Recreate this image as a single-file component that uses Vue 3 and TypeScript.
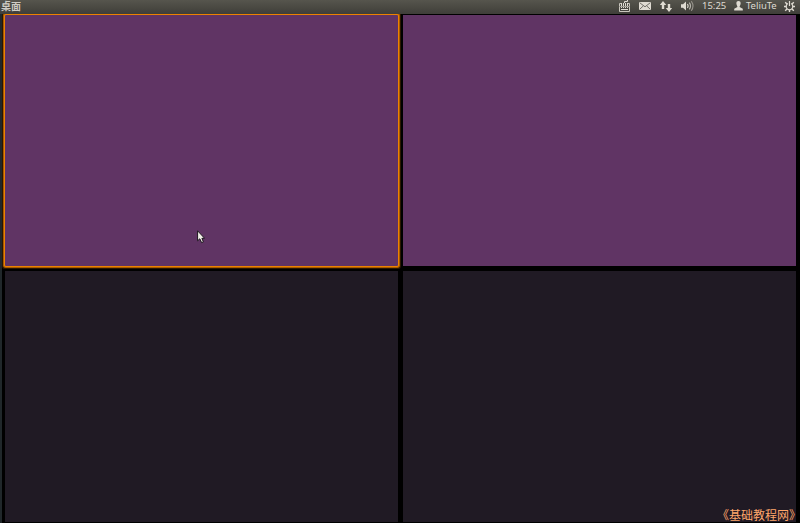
<script setup lang="ts">
const workspaces = [
  { id: 1, selected: true, lit: true },
  { id: 2, selected: false, lit: true },
  { id: 3, selected: false, lit: false },
  { id: 4, selected: false, lit: false },
]
</script>

<template>
  <div class="desktop">
    <header class="panel">
      <span class="title">桌面</span>
      <svg class="keyboard" width="13" height="12" viewBox="0 0 13 12">
        <path d="M6.5 3V1.5H9.5V0" fill="none" stroke="#dfdbd2" />
        <path d="M3 3.5H1.5V11.5H11.5V3.5H10" fill="none" stroke="#c9c6bd" />
        <path d="M3.5 3V8M5.5 3V8M7.5 3V8M9.5 3V8M3 9.5H10" stroke="#dfdbd2" fill="none" />
        <path d="M1 6.5H12" stroke="#a19e96" fill="none" />
      </svg>
      <svg class="mail" width="12" height="8" viewBox="0 0 12 8">
        <rect width="12" height="8" rx=".7" fill="#dfdbd2" />
        <path d="M.8.8 6 4.8 11.2.8M.8 7.2 4.2 4M11.2 7.2 7.8 4" fill="none" stroke="#54524b" stroke-width=".8" />
      </svg>
      <svg class="network" width="12" height="11" viewBox="0 0 12 11">
        <path d="M3 0 6.3 4H4.2V8H1.8V4H-.3ZM7.8 3h2.4v4h2.1L9 11 5.7 7H7.8Z" fill="#dfdbd2" />
      </svg>
      <svg class="sound" width="13" height="10" viewBox="0 0 13 10">
        <path d="M0 3.3H2L5 .5V9.5L2 6.7H0Z" fill="#dfdbd2" />
        <path d="M6.5 3Q7.8 5 6.5 7" fill="none" stroke="#dfdbd2" stroke-width="1.2" />
        <path d="M8.3 1.6Q10.7 5 8.3 8.4" fill="none" stroke="#b8b5ac" stroke-width="1.2" />
        <path d="M10.3.3Q13.7 5 10.3 9.7" fill="none" stroke="#99968e" stroke-width="1.1" />
      </svg>
      <span class="clock">15:25</span>
      <svg class="user" width="9" height="10" viewBox="0 0 9 10">
        <path d="M4.5 0C6.2 0 6.8 1.2 6.6 2.8 6.4 4.5 5.6 4.9 5.6 6L8.8 7.7V9.5H.2V7.7L3.4 6C3.4 4.9 2.6 4.5 2.4 2.8 2.2 1.2 2.8 0 4.5 0Z" fill="#dfdbd2" />
      </svg>
      <span class="name">TeliuTe</span>
      <svg class="session" width="11" height="11" viewBox="0 0 11 11">
        <path d="M3.9 2.6A3.3 3.3 0 1 0 7.1 2.6M5.5 0V5" fill="none" stroke="#dfdbd2" stroke-width="1.2" />
        <path d="M1.2 1.2 3 3M9.8 1.2 8 3M0 5.5H2.5M8.5 5.5H11M1.2 9.8 3 8M9.8 9.8 8 8M5.5 8.8V11" stroke="#dfdbd2" stroke-width="1.4" />
      </svg>
    </header>
    <main class="spread">
      <section
        v-for="w in workspaces"
        :key="w.id"
        class="workspace"
        :class="{ lit: w.lit, selected: w.selected }"
      />
    </main>
    <svg class="pointer" width="8" height="14" viewBox="0 0 8 14">
      <path d="M.6.8V10.8L2.8 8.8 4.6 12.6 6.4 11.9 4.9 8.3H7.6Z" fill="#f2f0e8" stroke="#1c151e" stroke-width="1" />
    </svg>
    <div class="watermark">《基础教程网》</div>
  </div>
</template>

<style>
body {
  margin: 0;
  overflow: hidden;
  background: #000;
}
</style>

<style scoped>
.desktop {
  position: relative;
  display: flex;
  flex-direction: column;
  width: 800px;
  height: 523px;
  overflow: hidden;
  background: #000;
}
.panel {
  display: flex;
  align-items: center;
  box-sizing: border-box;
  height: 14px;
  padding: 0 5px 2px 1px;
  background: linear-gradient(#56554d, #3f3e39);
  color: #dfdbd2;
  font: 10px/12px "Noto Sans", "Noto Sans CJK SC", sans-serif;
  white-space: nowrap;
}
.panel svg {
  flex: none;
}
.title {
  margin-right: auto;
  color: #cfccc4;
  font-family: "Noto Sans CJK SC", sans-serif;
  font-weight: 700;
}
.keyboard { margin-right: 8px; }
.mail { margin-right: 9px; }
.network { margin-right: 9px; }
.sound { margin-right: 8px; }
.clock { width: 24px; margin-right: 8px; font-size: 9.5px; }
.user { margin-right: 3px; }
.name { width: 30px; margin-right: 8px; font-size: 9.5px; }
.spread {
  flex: 1;
  display: grid;
  grid-template-columns: 393px 393px;
  grid-template-rows: 251px 251px;
  gap: 5px;
  padding: 1px 4px 1px 3px;
  border-left: 2px solid #20272a;
}
.workspace {
  background: #201a24;
}
.lit {
  background: #603464;
}
.selected {
  box-shadow: 0 0 0 1px #ed8200, 0 0 0 2px #a85b00, 0 0 0 3px #2b1700;
  border-radius: 1px;
  clip-path: inset(-1px -3px -3px -3px);
}
.pointer {
  position: absolute;
  left: 197px;
  top: 230px;
}
.watermark {
  position: absolute;
  right: -1px;
  bottom: 0;
  color: #ffa66b;
  font: 12px/17px "Noto Sans CJK SC", sans-serif;
  white-space: nowrap;
}
</style>
